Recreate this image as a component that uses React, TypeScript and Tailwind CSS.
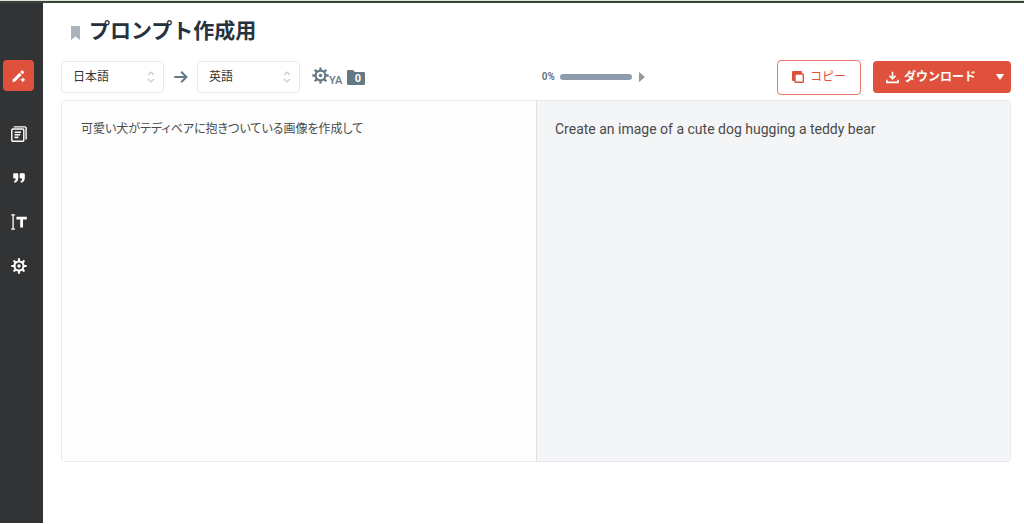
import React from "react";

type IconProps = { className?: string };

function PenSparkleIcon({ className }: IconProps) {
  return (
    <svg viewBox="0 0 14 14" className={className} fill="currentColor" aria-hidden="true">
      <path d="M1 10.2 7.4 3.8 9.6 6 3.2 12.4 .9 12.9Q.4 12.9.5 12.4Z" />
      <path d="M8.2 3 9.5 1.7a1 1 0 0 1 1.4 0l.8.8a1 1 0 0 1 0 1.4L10.4 5.2Z" />
      <path d="M10.8 8 11.7 9.9 13.6 10.8 11.7 11.7 10.8 13.6 9.9 11.7 8 10.8 9.9 9.9Z" />
    </svg>
  );
}

function DocumentsIcon({ className }: IconProps) {
  return (
    <svg viewBox="0 0 16 16" className={className} fill="none" stroke="currentColor" strokeWidth="1.4" aria-hidden="true">
      <rect x="0.8" y="3" width="12" height="12.2" rx="1" />
      <path d="M2.8 0.9H14a1.1 1.1 0 0 1 1.1 1.1V13.4" />
      <path d="M3.6 6.2H10M3.6 8.8H9.2M3.6 11.4H7.4" strokeWidth="1.6" />
    </svg>
  );
}

function QuoteIcon({ className }: IconProps) {
  return (
    <svg viewBox="0 0 12 10" className={className} fill="currentColor" aria-hidden="true">
      <path d="M0.9 0.3H4.2Q5.3 0.3 5.3 1.5V5C5.3 7.6 3.9 9.4 1.5 9.8L0.9 8.2C2.1 7.8 2.7 7 2.7 5.4H1Q0.2 5.4 0.2 4.6V1Q0.2 0.3 0.9 0.3Z" />
      <path d="M7.4 0.3H10.7Q11.8 0.3 11.8 1.5V5C11.8 7.6 10.4 9.4 8 9.8L7.4 8.2C8.6 7.8 9.2 7 9.2 5.4H7.5Q6.7 5.4 6.7 4.6V1Q6.7 0.3 7.4 0.3Z" />
    </svg>
  );
}

function TextCursorIcon({ className }: IconProps) {
  return (
    <svg viewBox="0 0 16 16" className={className} fill="none" stroke="currentColor" aria-hidden="true">
      <path d="M0.2 0.8H4M0.2 15.2H4M2.1 0.8V15.2" strokeWidth="1.3" />
      <path d="M5.4 4.2H15.8M10.6 4.2V13.4" strokeWidth="2.8" />
    </svg>
  );
}

function GearIcon({ className }: IconProps) {
  return (
    <svg viewBox="0 0 18 18" className={className} fill="none" stroke="currentColor" aria-hidden="true">
      <circle cx="9" cy="9" r="5.1" strokeWidth="2.3" />
      <circle cx="9" cy="9" r="1.9" fill="currentColor" stroke="none" />
      <path
        d="M9 4V0.4M9 14V17.6M4 9H0.4M14 9H17.6M5.4 5.4 2.9 2.9M12.6 5.4 15.1 2.9M5.4 12.6 2.9 15.1M12.6 12.6 15.1 15.1"
        strokeWidth="2.4"
      />
    </svg>
  );
}

function ArrowIcon({ className }: IconProps) {
  return (
    <svg viewBox="0 0 14 12" className={className} fill="none" stroke="currentColor" strokeWidth="2" aria-hidden="true">
      <path d="M0.3 6H12.4M7.2 0.8 12.4 6 7.2 11.2" />
    </svg>
  );
}

function CopyIcon({ className }: IconProps) {
  return (
    <svg viewBox="0 0 12 12" className={className} aria-hidden="true">
      <rect x="0" y="0" width="10" height="10" rx="1.2" fill="currentColor" />
      <rect x="3" y="3" width="8.3" height="8.3" rx="0.8" fill="#fff" stroke="currentColor" strokeWidth="1.4" />
    </svg>
  );
}

function DownloadIcon({ className }: IconProps) {
  return (
    <svg viewBox="0 0 13 13" className={className} fill="none" stroke="currentColor" strokeWidth="1.6" aria-hidden="true">
      <path d="M6.5 0.8V7.6M3.4 4.8 6.5 7.9 9.6 4.8M0.9 8.8V11.4H12.1V8.8" />
    </svg>
  );
}

function LanguageSelect({ label, value, options }: { label: string; value: string; options: string[] }) {
  return (
    <div className="relative w-[103px]">
      <select
        aria-label={label}
        defaultValue={value}
        className="block h-8 w-full appearance-none rounded border border-[#e6e8eb] bg-white pl-[11px] pr-6 text-xs text-[#333]"
      >
        {options.map((o) => (
          <option key={o}>{o}</option>
        ))}
      </select>
      <svg
        viewBox="0 0 8 12"
        className="pointer-events-none absolute right-[9px] top-1/2 h-3 w-2 -translate-y-1/2 text-[#c5cbd2]"
        fill="none"
        stroke="currentColor"
        strokeWidth="1.2"
        aria-hidden="true"
      >
        <path d="M1 4 4 1 7 4M1 8 4 11 7 8" />
      </svg>
    </div>
  );
}

const tools = [
  { label: "原稿", Icon: DocumentsIcon, size: "h-4 w-4" },
  { label: "引用", Icon: QuoteIcon, size: "h-[10px] w-3" },
  { label: "テキスト", Icon: TextCursorIcon, size: "h-4 w-4" },
  { label: "設定", Icon: GearIcon, size: "h-4 w-4" },
];

export default function App() {
  return (
    <div className="flex min-h-screen flex-col bg-white font-['Roboto','Noto_Sans_CJK_JP',sans-serif]">
      <div className="h-[3px] border-t border-[#dfe3df] bg-[#3b4639]" />
      <div className="flex flex-1">
        <nav aria-label="ツール" className="mb-px flex w-[43px] shrink-0 flex-col items-start bg-[#323335] pl-[3px] pt-[57px] text-white">
          <button type="button" aria-label="作成" className="flex h-[31px] w-[31px] items-center justify-center rounded bg-[#df513c]">
            <PenSparkleIcon className="h-[14px] w-[14px]" />
          </button>
          <div className="mt-[27px] flex flex-col gap-3">
            {tools.map(({ label, Icon, size }) => (
              <button key={label} type="button" aria-label={label} className="flex h-8 w-8 items-center justify-center">
                <Icon className={size} />
              </button>
            ))}
          </div>
        </nav>

        <main className="flex min-w-0 flex-1 flex-col pb-[62px] pl-[18px] pr-[13px] pt-3">
          <header className="flex items-center gap-[9px] pl-[10px]">
            <svg viewBox="0 0 9 14" className="mt-1 h-[14px] w-[9px] text-[#a9b4be]" fill="currentColor" aria-hidden="true">
              <path d="M0 0H9V14L4.5 10.5 0 14Z" />
            </svg>
            <h1 className="text-[21px] font-bold leading-8 text-[#26323d]">プロンプト作成用</h1>
          </header>

          <div className="mt-3 flex h-9 items-center">
            <LanguageSelect label="翻訳元の言語" value="日本語" options={["日本語", "英語"]} />
            <ArrowIcon className="ml-[10px] mr-[9px] h-3 w-[14px] text-[#647885]" />
            <LanguageSelect label="翻訳先の言語" value="英語" options={["英語", "日本語"]} />
            <button type="button" aria-label="用語設定" className="ml-3 flex items-end text-[#647885]">
              <GearIcon className="mb-[3px] h-[17px] w-[17px]" />
              <span className="text-[11px] font-medium leading-3">YA</span>
            </button>
            <button type="button" aria-label="フォルダー" className="relative ml-[5px] h-[15px] w-[18px] text-[#647885]">
              <svg viewBox="0 0 18 15" className="h-full w-full" fill="currentColor" aria-hidden="true">
                <path d="M1.2 0H6L8 2H16.8A1.2 1.2 0 0 1 18 3.2V13.8A1.2 1.2 0 0 1 16.8 15H1.2A1.2 1.2 0 0 1 0 13.8V1.2A1.2 1.2 0 0 1 1.2 0Z" />
              </svg>
              <span className="absolute inset-x-0 bottom-0 pl-[3px] text-center text-[11px] font-bold leading-3 text-white">0</span>
            </button>

            <div className="ml-auto flex items-center">
              <span className="text-[10px] font-bold leading-3 text-[#647885]">0%</span>
              <div role="progressbar" aria-label="進捗" aria-valuenow={0} className="ml-[5px] h-[6px] w-[72px] rounded-full bg-[#8d9cab]" />
              <button type="button" aria-label="次へ" className="ml-[7px] text-[#999]">
                <svg viewBox="0 0 6 10" className="h-[10px] w-[6px]" fill="currentColor" aria-hidden="true">
                  <path d="M0 0.6V9.4Q0 10 .6 9.7L6 5 .6.3Q0 0 0 .6Z" />
                </svg>
              </button>
            </div>

            <button
              type="button"
              className="ml-[132px] flex h-[35px] w-[84px] items-center justify-center gap-[6px] rounded border border-[#e5786a] bg-white text-xs text-[#df513c]"
            >
              <CopyIcon className="h-3 w-3" />
              コピー
            </button>
            <div className="ml-3 flex h-8 w-[138px] rounded bg-[#df513c] text-white">
              <button type="button" className="flex flex-1 items-center gap-[5px] pl-[13px] text-xs font-bold">
                <DownloadIcon className="h-[13px] w-[13px]" />
                ダウンロード
              </button>
              <button type="button" aria-label="形式を選択" className="flex w-[22px] items-center justify-center">
                <svg viewBox="0 0 8 6" className="h-[6px] w-[8px]" fill="currentColor" aria-hidden="true">
                  <path d="M0.6 0H7.4Q8 0 7.7.7L4 6 .3.7Q0 0 .6 0Z" />
                </svg>
              </button>
            </div>
          </div>

          <section className="mt-[5px] grid flex-1 grid-cols-2 overflow-hidden rounded border border-[#e5e8ec]">
            <textarea
              aria-label="原文"
              defaultValue="可愛い犬がテディベアに抱きついている画像を作成して"
              className="resize-none bg-[#fdfdfd] py-[18px] pl-[19px] pr-4 text-xs leading-5 text-[#4a4a4a] outline-none [font-feature-settings:'palt']"
            />
            <div className="border-l border-[#dde1e8] bg-[#f4f5f7] px-[18px] py-[18px] text-sm leading-5 text-[#4a4a4a]">
              Create an image of a cute dog hugging a teddy bear
            </div>
          </section>
        </main>
      </div>
    </div>
  );
}
